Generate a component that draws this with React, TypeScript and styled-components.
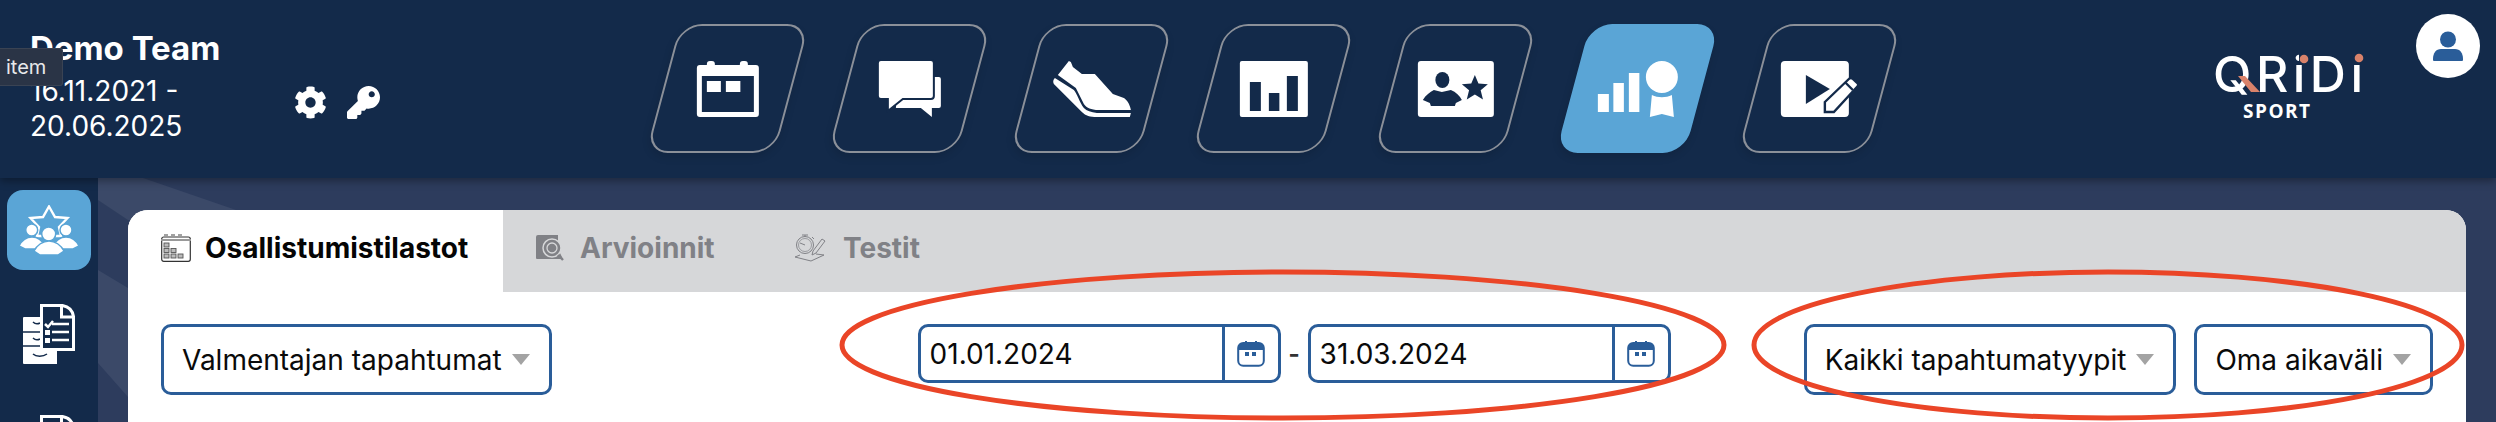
import React from 'react'
import styled, { createGlobalStyle } from 'styled-components'
import { FaCog, FaKey } from 'react-icons/fa'

const NAVY = '#132a4a'
const BLUE = '#2a5d99'
const SKY = '#5aa5d6'
const MUTED = '#808186'

const GlobalStyle = createGlobalStyle`
  html, body {
    margin: 0;
    padding: 0;
    background: #2d3c5d;
    overflow: hidden;
  }
  #root {
    height: 422px;
  }
  * {
    box-sizing: border-box;
  }
`

const Page = styled.div`
  position: relative;
  display: flex;
  flex-direction: column;
  width: 2496px;
  height: 422px;
  overflow: hidden;
  font-family: Inter, 'Liberation Sans', sans-serif;
`

const Header = styled.header`
  position: relative;
  z-index: 2;
  display: flex;
  align-items: flex-start;
  flex: 0 0 178px;
  padding-right: 16px;
  background: ${NAVY};
  box-shadow: 0 3px 8px rgba(0, 0, 0, 0.35);
`

const TeamBlock = styled.div`
  display: flex;
  align-items: center;
  flex: 0 0 663px;
  padding: 28px 0 0 30px;
  color: #fff;
`

const TeamText = styled.div`
  flex: 0 0 264px;
`

const TeamName = styled.div`
  font-size: 33px;
  font-weight: 700;
  line-height: 40px;
  margin-bottom: 6px;
`

const TeamDates = styled.div`
  font-size: 28px;
  line-height: 35px;
`

const TeamActions = styled.div`
  display: flex;
  align-items: center;
  gap: 20px;
  margin-top: 32px;
  font-size: 33px;
`

const Tooltip = styled.div`
  position: absolute;
  left: 0;
  top: 48px;
  width: 63px;
  height: 38px;
  padding-left: 6px;
  background: #2a3446;
  border: 1px solid #3a4353;
  border-left: 0;
  border-radius: 0 3px 3px 0;
  color: #e8e9eb;
  font-size: 20px;
  line-height: 36px;
`

const Nav = styled.nav`
  display: flex;
  gap: 53px;
  margin-top: 24px;
`

const Tile = styled.div<{ $active?: boolean }>`
  display: flex;
  align-items: center;
  justify-content: center;
  width: 129px;
  height: 129px;
  border-radius: 22px;
  transform: skewX(-15deg);
  border: ${({ $active }) => ($active ? 'none' : '2px solid #8b9099')};
  background: ${({ $active }) => ($active ? SKY : 'transparent')};
  box-shadow: 0 4px 8px rgba(0, 0, 0, 0.12);

  svg {
    flex: none;
    transform: skewX(15deg);
    overflow: visible;
  }
`

const Brand = styled.div`
  display: flex;
  align-items: flex-start;
  gap: 53px;
  margin-left: auto;
`

const Logo = styled.svg`
  margin-top: 50px;
  overflow: visible;
`

const Avatar = styled.div`
  display: flex;
  align-items: center;
  justify-content: center;
  width: 64px;
  height: 64px;
  margin-top: 14px;
  border-radius: 50%;
  background: #fff;
`

const Body = styled.div`
  display: flex;
  flex: 1;
  min-height: 0;
`

const Sidebar = styled.aside`
  display: flex;
  flex-direction: column;
  align-items: center;
  flex: 0 0 98px;
  padding-top: 12px;
  background: ${NAVY};
`

const SideButton = styled.div`
  display: flex;
  align-items: center;
  justify-content: center;
  flex: none;
  width: 84px;
  height: 80px;
  border-radius: 16px;
  background: ${SKY};
`

const SideIcon = styled.div<{ $offset: number }>`
  display: flex;
  justify-content: center;
  flex: none;
  width: 84px;
  margin-top: ${({ $offset }) => $offset}px;
`

const Content = styled.main`
  position: relative;
  flex: 1;
  padding: 32px 30px 0;
  background: #2d3c5d;

  &::before,
  &::after {
    content: '';
    position: absolute;
    left: 0;
    top: 0;
    width: 140px;
    height: 244px;
    background: #3b4968;
  }
  &::before {
    clip-path: polygon(0 0, 45px 0, 138px 32px, 138px 60px, 30px 42px, 0 22px);
  }
  &::after {
    clip-path: polygon(0 92px, 30px 110px, 30px 219px, 0 185px);
  }
`

const Card = styled.section`
  position: relative;
  z-index: 1;
  height: 100%;
  border-radius: 20px 20px 0 0;
  background: #fff;
  overflow: hidden;
`

const TabBar = styled.div`
  display: flex;
  height: 82px;
  background: #d6d7d9;
`

const Tab = styled.div<{ $active?: boolean; $width: number; $gap: number; $pad: number }>`
  display: flex;
  align-items: center;
  gap: ${({ $gap }) => $gap}px;
  width: ${({ $width }) => $width}px;
  padding-left: ${({ $pad }) => $pad}px;
  padding-bottom: 6px;
  background: ${({ $active }) => ($active ? '#fff' : 'transparent')};
  color: ${({ $active }) => ($active ? '#050505' : MUTED)};
  font-size: 28px;
  font-weight: 700;

  svg {
    flex: none;
  }
`

const Toolbar = styled.div`
  display: flex;
  align-items: flex-start;
  padding: 32px 33px 0;
`

const Select = styled.div`
  display: flex;
  align-items: center;
  justify-content: space-between;
  height: 71px;
  padding: 0 19px 0 18px;
  border: 3px solid ${BLUE};
  border-radius: 10px;
  background: #fff;
  color: #0a0a0a;
  font-size: 28px;
  white-space: nowrap;
`

const Caret = styled.span`
  width: 0;
  height: 0;
  margin-left: 10px;
  border-left: 9.5px solid transparent;
  border-right: 9.5px solid transparent;
  border-top: 11px solid #a3a3a3;
`

const DateRange = styled.div`
  display: flex;
  align-items: center;
  margin-left: 366px;
`

const DateField = styled.div`
  display: flex;
  width: 363px;
  height: 59px;
  border: 3px solid ${BLUE};
  border-radius: 10px;
  background: #fff;
`

const DateValue = styled.div`
  flex: 1;
  padding-left: 9px;
  border-right: 3px solid ${BLUE};
  color: #0a0a0a;
  font-size: 28px;
  line-height: 54px;
`

const DateButton = styled.div`
  display: flex;
  align-items: center;
  justify-content: center;
  flex: 0 0 53px;
`

const Dash = styled.span`
  width: 27px;
  text-align: center;
  color: #333;
  font-size: 25px;
  font-weight: 600;
`

const SelectGroup = styled.div`
  display: flex;
  gap: 18px;
  margin-left: auto;
`

const Annotations = styled.svg`
  position: absolute;
  left: 0;
  top: 0;
  z-index: 3;
  pointer-events: none;
`

const CalendarIcon = () => (
  <svg width="62" height="56" viewBox="0 0 62 56">
    <path
      fill="#fff"
      d="M3 4h7V3a3 3 0 0 1 3-3h2a3 3 0 0 1 3 3v1h25V3a3 3 0 0 1 3-3h2a3 3 0 0 1 3 3v1h8a3 3 0 0 1 3 3v46a3 3 0 0 1-3 3H3a3 3 0 0 1-3-3V7a3 3 0 0 1 3-3z"
    />
    <rect x="5" y="15" width="52" height="36" fill={NAVY} />
    <rect x="10" y="20" width="14" height="11" fill="#fff" />
    <rect x="29" y="20" width="14.5" height="11" fill="#fff" />
  </svg>
)

const ChatIcon = () => (
  <svg width="62" height="56" viewBox="0 0 62 56">
    <path fill="#fff" d="M20 16h40a2 2 0 0 1 2 2v27a2 2 0 0 1-2 2h-7v9L42 47H17z" />
    <path
      fill="#fff"
      stroke={NAVY}
      strokeWidth="2"
      d="M2-1h50a3 3 0 0 1 3 3v33a3 3 0 0 1-3 3H24L9 50V38H2a3 3 0 0 1-3-3V2a3 3 0 0 1 3-3z"
    />
  </svg>
)

const ShoeIcon = () => (
  <svg width="78" height="56" viewBox="0 0 78 56">
    <path
      fill="#fff"
      d="M16 0l2 1 2 5 9 7h13l18 20 11 4c3 2 6 6 7 12H43c-7-1-10-3-12-6L23 27 5 14z"
    />
    <path
      fill="#fff"
      d="M2 17l19 12c3 3 6 13 10 18 3 3 7 4 13 5h34l-1 4H44c-7 0-11-1-15-5L1 23c-1-2-1-4 1-6z"
    />
  </svg>
)

const ChartIcon = () => (
  <svg width="68" height="56" viewBox="0 0 68 56">
    <rect width="68" height="56" rx="2" fill="#fff" />
    <rect x="10" y="21" width="11" height="29" fill={NAVY} />
    <rect x="29" y="32" width="10.5" height="18" fill={NAVY} />
    <rect x="47" y="15" width="11" height="35" fill={NAVY} />
  </svg>
)

const PlayerCardIcon = () => (
  <svg width="76" height="56" viewBox="0 0 76 56">
    <rect width="76" height="56" rx="3" fill="#fff" />
    <ellipse cx="24.5" cy="19" rx="7" ry="8" fill={NAVY} />
    <path
      fill={NAVY}
      d="M16 29l8 2 9-2c5 2 9 6 11 10l-6 3-1 3H13l-1-3-7-3c3-5 7-8 11-10z"
    />
    <path
      fill={NAVY}
      d="M57 14l3.6 8.6 9.4.7-7.200 6 2.300 9.200-8.100-5-8.100 5 2.300-9.200-7.200-6 9.400-.7z"
    />
  </svg>
)

const RatingsIcon = () => (
  <svg width="80" height="56" viewBox="0 0 80 56">
    <g fill="#fff">
      <rect y="33" width="11" height="18" />
      <rect x="15.500" y="22" width="10.500" height="29" />
      <rect x="31" y="12" width="10.500" height="39" />
      <circle cx="64" cy="16" r="16" />
      <path d="M54 34c6 3 14 3 20 0l2 22-12-3-12 3z" />
    </g>
  </svg>
)

const VideoIcon = () => (
  <svg width="77" height="56" viewBox="0 0 77 56">
    <rect width="68" height="56" rx="4" fill="#fff" />
    <path fill={NAVY} d="M25 14l24 14-24 15z" />
    <path
      fill="#fff"
      stroke={NAVY}
      strokeWidth="2.400"
      d="M44 41l24-23c1-1 3-1 4 0l4.500 4c1 1 1 2.500 0 3.500L53 51H44z"
    />
    <path stroke={NAVY} strokeWidth="2.400" d="M64 21l8 8" fill="none" />
  </svg>
)

const QridiLogo = () => (
  <Logo width="147" height="68" viewBox="0 0 147 68">
    <text
      x="-3"
      y="42"
      fill="#fff"
      fontFamily="Inter, sans-serif"
      fontSize="50"
      fontWeight="500"
      textLength="150"
      lengthAdjust="spacing"
    >
      QRiDi
    </text>
    <path fill="#d9826a" d="M22 26h7l15 16h-9z" />
    <rect x="83" y="0" width="12" height="13" fill={NAVY} />
    <rect x="137" y="0" width="12" height="13" fill={NAVY} />
    <circle cx="88" cy="9" r="4.300" fill="#d9826a" />
    <circle cx="143" cy="8" r="4.300" fill="#d9826a" />
    <text
      x="27"
      y="68"
      fill="#fff"
      fontFamily="'Open Sans', sans-serif"
      fontSize="19"
      fontWeight="700"
      letterSpacing="1.500"
    >
      SPORT
    </text>
  </Logo>
)

const PersonIcon = () => (
  <svg width="30" height="30" viewBox="0 0 30 30" fill={BLUE}>
    <circle cx="15" cy="8.500" r="8" />
    <path d="M8 18h14c5 0 8 4 8 10v1a1 1 0 0 1-1 1H1a1 1 0 0 1-1-1v-1c0-6 3-10 8-10z" />
  </svg>
)

const TeamStarIcon = () => (
  <svg width="60" height="50" viewBox="0 0 60 50">
    <path
      fill="none"
      stroke="#fff"
      strokeWidth="2.400"
      d="M30 1.500l6 10.500 12.500 1-8.500 9 2 9H18l2-9-8.500-9L24 12z"
    />
    <g fill="#fff" stroke={SKY} strokeWidth="1.500">
      <circle cx="12.700" cy="25" r="6" />
      <circle cx="47" cy="25" r="6" />
      <path d="M0 41c3-6 8-9 13-9s10 3 13 9l-6 3H6z" />
      <path d="M60 41c-3-6-8-9-13-9s-10 3-13 9l6 3h14z" />
      <circle cx="29.700" cy="29" r="7" />
      <path d="M15 46c3-6 9-10 15-10s12 4 15 10l-6 4H21z" />
    </g>
  </svg>
)

const ChecklistIcon = () => (
  <svg width="52" height="60" viewBox="0 0 52 60">
    <path fill="#fff" d="M1 13h33v47H1a1 1 0 0 1-1-1V14a1 1 0 0 1 1-1z" />
    <path stroke={NAVY} strokeWidth="1.500" d="M0 28h20M0 42h20" />
    <path
      fill="none"
      stroke={NAVY}
      strokeWidth="1.500"
      d="M10 18c2 2 5 2 7 1M10 34c2 2 5 2 7 1M10 50c3 3 10 3 14 0"
    />
    <path
      fill={NAVY}
      stroke="#fff"
      strokeWidth="3"
      d="M18.500 1.500h21c6 1 10 5 11 11v33h-32z"
    />
    <path fill="none" stroke="#fff" strokeWidth="3" d="M38.500 2v11h12" />
    <path fill="none" stroke="#fff" strokeWidth="2.500" d="M22 20l3 3 5-6" />
    <rect x="22" y="26" width="5" height="5" fill="#fff" />
    <rect x="22" y="34" width="5" height="5" fill="#fff" />
    <path stroke="#fff" strokeWidth="2.500" d="M29 20h17M29 28h17M29 36h17" />
  </svg>
)

const StatsTabIcon = () => (
  <svg width="30" height="28" viewBox="0 0 30 28" fill="none">
    <rect x="0.700" y="3" width="28.600" height="24.300" rx="2" stroke="#333" strokeWidth="1.200" />
    <path d="M0 5h30v2H0z" fill="#999" />
    <path d="M3 1h4M10 1h4M17 1h4" stroke="#444" strokeWidth="1" />
    <g fill="#bbb" stroke="#555" strokeWidth="0.900">
      <rect x="3" y="9" width="5" height="4" />
      <rect x="3" y="14.500" width="5" height="4" />
      <rect x="3" y="20" width="5" height="4" />
      <rect x="10" y="14.500" width="5" height="4" />
      <rect x="10" y="20" width="5" height="4" />
      <rect x="17" y="20" width="5" height="4" />
    </g>
  </svg>
)

const ReviewTabIcon = () => (
  <svg width="28" height="26" viewBox="0 0 28 26" fill="none">
    <path d="M2 0h20v14l5 10H1a1 1 0 0 1-1-1V2a2 2 0 0 1 2-2z" fill={MUTED} />
    <circle cx="16" cy="13" r="9" fill={MUTED} stroke="#d6d7d9" strokeWidth="1.500" />
    <circle cx="16" cy="13" r="5" stroke="#d6d7d9" strokeWidth="1.300" />
    <path d="M22 20l5 5" stroke={MUTED} strokeWidth="2.400" />
  </svg>
)

const TestTabIcon = () => (
  <svg width="32" height="28" viewBox="0 0 32 28" fill="none" stroke={MUTED} strokeWidth="1">
    <circle cx="11" cy="11" r="8.500" />
    <circle cx="11" cy="11" r="6.500" strokeWidth="0.700" />
    <path d="M8 1h6M11 1v2M6 9l5 2M18 3l2 2" />
    <path d="M19 17L28 5l3 2-9 12-4 2z" />
    <path d="M6 21l-5 2 16 4 13-6-8-1" />
  </svg>
)

const SmallCalendar = () => (
  <svg width="28" height="27" viewBox="0 0 28 27" fill="none">
    <rect x="1.200" y="3" width="25.600" height="22.800" rx="5" stroke={BLUE} strokeWidth="2" />
    <path d="M1 8a5 5 0 0 1 5-5h2V1h2v2h8V1h2v2h2a5 5 0 0 1 5 5v2H1z" fill={BLUE} />
    <rect x="8" y="12" width="4" height="4" fill={BLUE} />
    <rect x="15" y="12" width="4" height="4" fill={BLUE} />
  </svg>
)

const navItems = [
  { id: 'calendar', icon: <CalendarIcon /> },
  { id: 'chat', icon: <ChatIcon /> },
  { id: 'shoe', icon: <ShoeIcon /> },
  { id: 'chart', icon: <ChartIcon /> },
  { id: 'card', icon: <PlayerCardIcon /> },
  { id: 'ratings', icon: <RatingsIcon />, active: true },
  { id: 'video', icon: <VideoIcon /> }
]

export default function App() {
  return (
    <Page>
      <GlobalStyle />
      <Header>
        <TeamBlock>
          <TeamText>
            <TeamName>Demo Team</TeamName>
            <TeamDates>
              16.11.2021 -
              <br />
              20.06.2025
            </TeamDates>
          </TeamText>
          <TeamActions>
            <FaCog />
            <FaKey />
          </TeamActions>
        </TeamBlock>
        <Nav>
          {navItems.map(item => (
            <Tile key={item.id} $active={item.active}>
              {item.icon}
            </Tile>
          ))}
        </Nav>
        <Brand>
          <QridiLogo />
          <Avatar>
            <PersonIcon />
          </Avatar>
        </Brand>
        <Tooltip>item</Tooltip>
      </Header>
      <Body>
        <Sidebar>
          <SideButton>
            <TeamStarIcon />
          </SideButton>
          <SideIcon $offset={34}>
            <ChecklistIcon />
          </SideIcon>
          <SideIcon $offset={51}>
            <ChecklistIcon />
          </SideIcon>
        </Sidebar>
        <Content>
          <Card>
            <TabBar>
              <Tab $active $width={375} $gap={14} $pad={33}>
                <StatsTabIcon />
                Osallistumistilastot
              </Tab>
              <Tab $width={258} $gap={16} $pad={33}>
                <ReviewTabIcon />
                Arvioinnit
              </Tab>
              <Tab $width={200} $gap={17} $pad={33}>
                <TestTabIcon />
                Testit
              </Tab>
            </TabBar>
            <Toolbar>
              <Select>
                Valmentajan tapahtumat
                <Caret />
              </Select>
              <DateRange>
                <DateField>
                  <DateValue>01.01.2024</DateValue>
                  <DateButton>
                    <SmallCalendar />
                  </DateButton>
                </DateField>
                <Dash>-</Dash>
                <DateField>
                  <DateValue>31.03.2024</DateValue>
                  <DateButton>
                    <SmallCalendar />
                  </DateButton>
                </DateField>
              </DateRange>
              <SelectGroup>
                <Select>
                  Kaikki tapahtumatyypit
                  <Caret />
                </Select>
                <Select>
                  Oma aikaväli
                  <Caret />
                </Select>
              </SelectGroup>
            </Toolbar>
          </Card>
        </Content>
      </Body>
      <Annotations width="2496" height="422" viewBox="0 0 2496 422" fill="none" stroke="#ea4527" strokeWidth="5">
        <ellipse cx="1283" cy="345" rx="441" ry="73" />
        <ellipse cx="2108" cy="345" rx="354" ry="73" />
      </Annotations>
    </Page>
  )
}
